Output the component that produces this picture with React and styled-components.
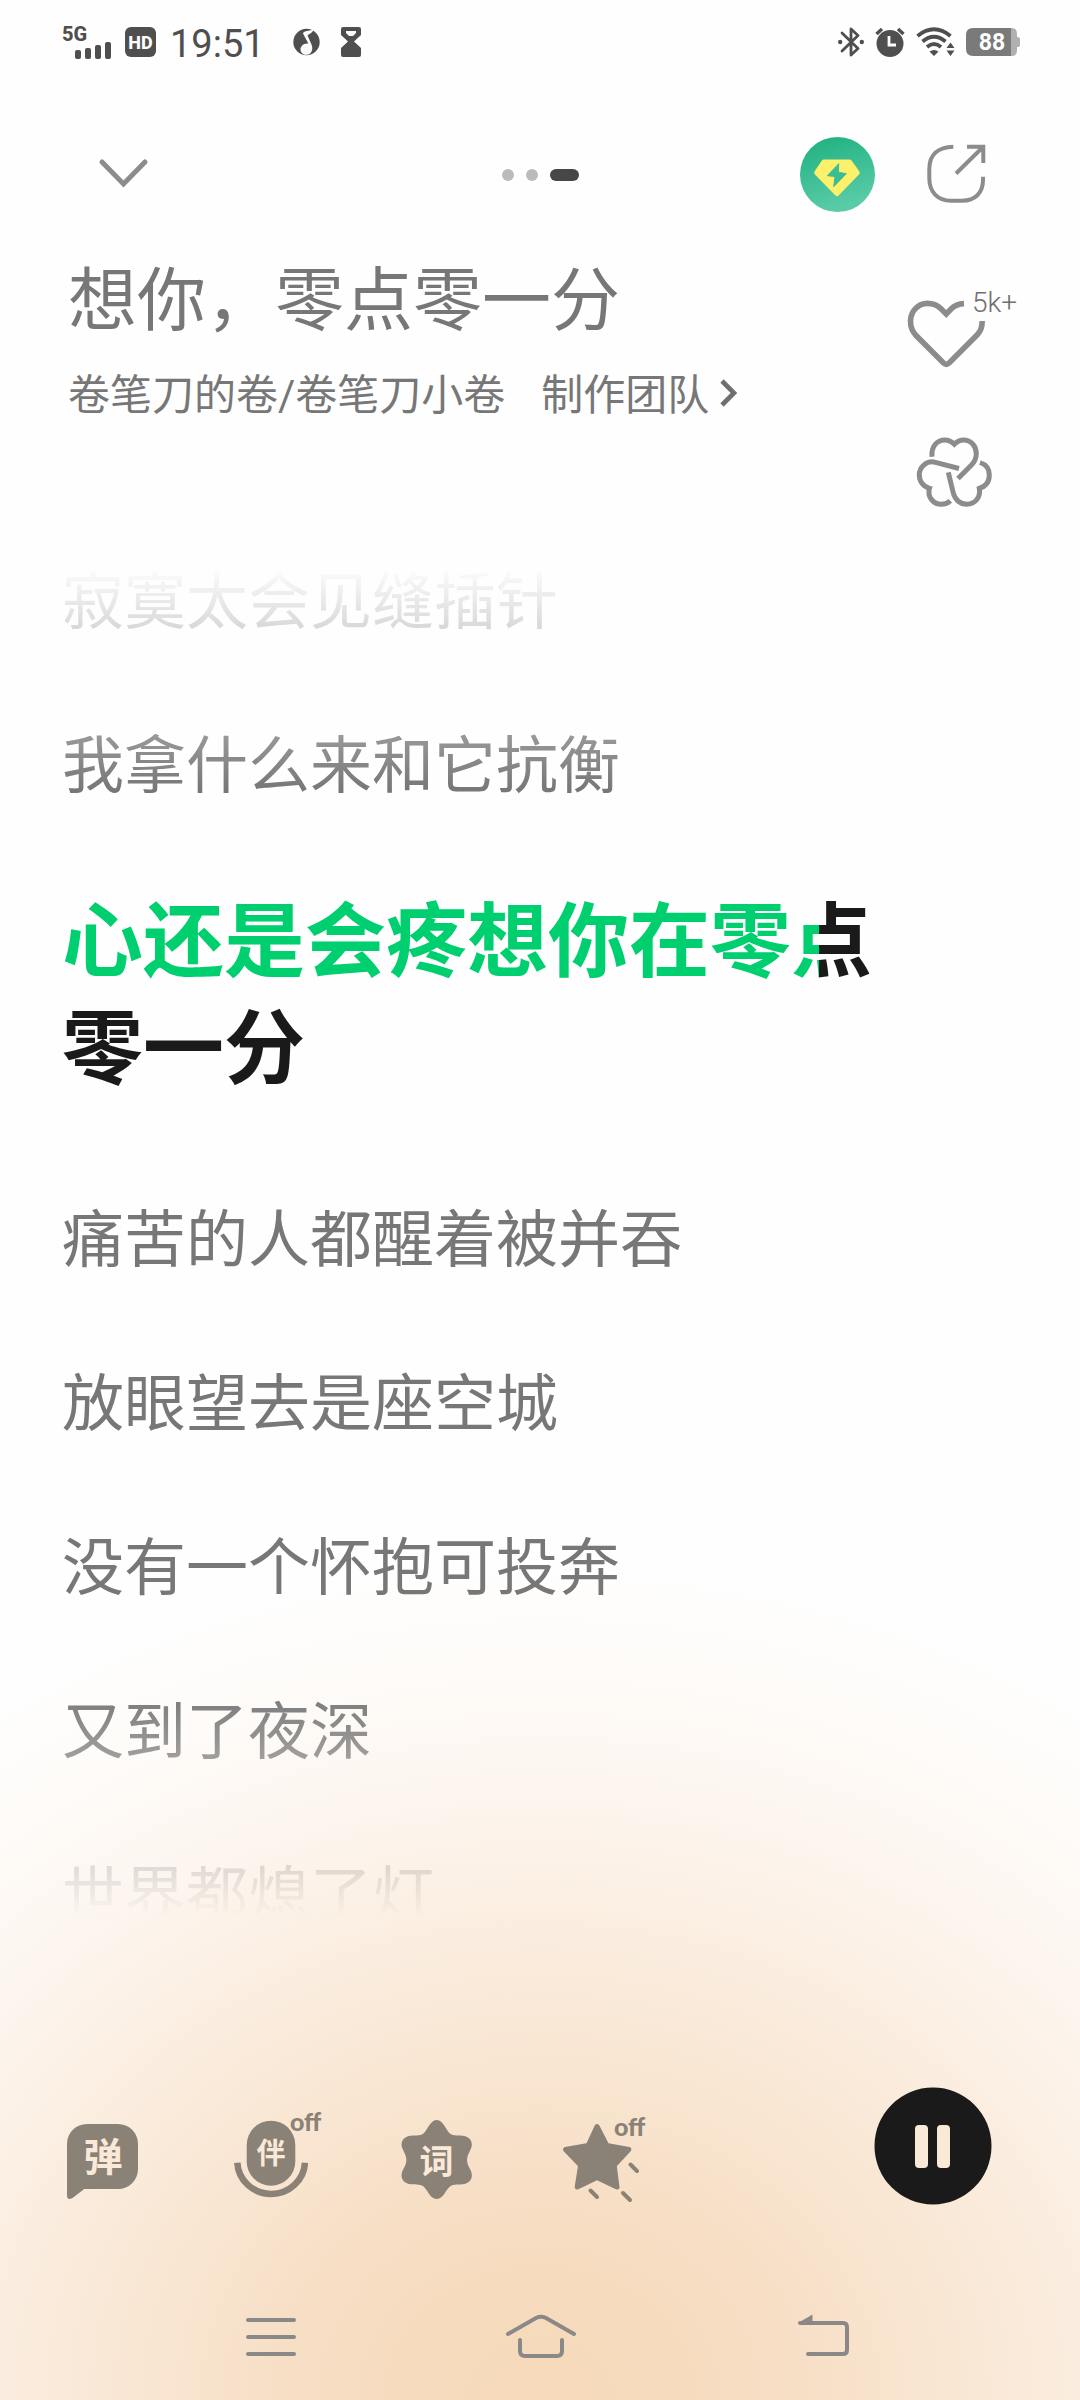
import React from 'react';
import styled, { createGlobalStyle } from 'styled-components';

const lines = [
  { id: 1, text: '寂寞太会见缝插针' },
  { id: 2, text: '我拿什么来和它抗衡' },
  { id: 3, active: true, sung: '心还是会疼想你在零', current: '点', progress: 35, rest: '零一分' },
  { id: 4, text: '痛苦的人都醒着被并吞' },
  { id: 5, text: '放眼望去是座空城' },
  { id: 6, text: '没有一个怀抱可投奔' },
  { id: 7, text: '又到了夜深' },
  { id: 8, text: '世界都熄了灯' },
];

export default function App() {
  return (
    <>
      <GlobalStyle />
      <Screen>
        <StatusBar />
        <PlayerHeader />
        <SongInfo />
        <Lyrics>
          {lines.map(line => <Line key={line.id} line={line} />)}
        </Lyrics>
        <PlayerTools />
        <SystemNav />
      </Screen>
    </>
  )
}

function StatusBar() {
  return (
    <StatusWrapper>
      <StatusGroup $gap={14}>
        <svg width="48" height="34" viewBox="0 0 48 34" fill="#4f4f4f">
          <text x="-1" y="16" fontSize="20" fontWeight="800">5G</text>
          <rect x="12" y="25" width="6" height="9" rx="2" />
          <rect x="22" y="23" width="6" height="11" rx="2" />
          <rect x="32" y="20" width="6" height="14" rx="2" />
          <rect x="42" y="17" width="6" height="17" rx="2" />
        </svg>
        <svg width="31" height="30" viewBox="0 0 31 30">
          <rect width="31" height="30" rx="6" fill="#4f4f4f" />
          <text x="15.500" y="21.500" textAnchor="middle" fontSize="18" fontWeight="800" fill="#fdfdfd">HD</text>
        </svg>
        <Clock>19:51</Clock>
        <svg width="27" height="28" viewBox="0 0 27 28">
          <circle cx="13.5" cy="14" r="13.2" fill="#4f4f4f" />
          <path d="M20.500 1 C18 3.500 10.500 2 10 5.500 L15.500 15.800 C11.500 14.600 7.500 18 7.500 21.500 C7.500 24.500 10 26.800 13.500 26.800 C18.500 26.800 20.500 21.500 18.500 16.500 L14.500 7.500 C16.500 5.500 20 5 20.500 1Z" fill="#fdfdfd" />
        </svg>
        <Hourglass width="20" height="30" viewBox="0 0 20 30">
          <path d="M2 0 H18 Q20 0 20 2 V8 L13 14.5 L20 21 V28 Q20 30 18 30 H2 Q0 30 0 28 V21 L7 14.5 L0 8 V2 Q0 0 2 0Z" fill="#4f4f4f" />
          <path d="M5 4 H15 V6 L12 9 H8 L5 6Z" fill="#fdfdfd" />
        </Hourglass>
      </StatusGroup>
      <StatusGroup $gap={11}>
        <svg width="26" height="30" viewBox="0 0 26 30" fill="none" stroke="#4f4f4f" strokeWidth="2.800">
          <path d="M4 6 L20 21.5 L13 28 V2 L20 8.5 L4 24" strokeLinejoin="round" strokeLinecap="round" />
          <circle cx="2.2" cy="15" r="2.2" fill="#4f4f4f" stroke="none" />
          <circle cx="23.8" cy="15" r="2.2" fill="#4f4f4f" stroke="none" />
        </svg>
        <svg width="30" height="30" viewBox="0 0 30 30">
          <circle cx="15" cy="16.5" r="13.5" fill="#4f4f4f" />
          <path d="M1.5 7 L7 2 M28.500 7 L23 2" stroke="#4f4f4f" strokeWidth="3.4" />
          <path d="M14 9 V18 H21" stroke="#fdfdfd" strokeWidth="2.8" fill="none" />
        </svg>
        <svg width="39" height="30" viewBox="0 0 39 30" fill="none" stroke="#4f4f4f" strokeWidth="3.800">
          <path d="M1.500 9 Q18 -4.500 34.500 9" />
          <path d="M6.500 14.500 Q18 5 29.500 14.500" />
          <path d="M11 20 Q18 14 25 20" />
          <path d="M18 29 L13.500 24.500 Q18 21.500 22.500 24.500Z M34.500 15.500 L38.500 21 H30.500Z M34.500 29 L38.500 23.500 H30.500Z" fill="#4f4f4f" stroke="none" />
        </svg>
        <svg width="54" height="28" viewBox="0 0 54 28">
          <path d="M44 0 H46 Q51 0 51 6 V9 Q54 9 54 11 V17 Q54 19 51 19 V22 Q51 28 46 28 H44Z" fill="#b0b0b0" />
          <path d="M7 0 H45 V28 H7 Q0 28 0 21 V7 Q0 0 7 0Z" fill="#7a7a7a" />
          <text x="26" y="22" textAnchor="middle" fontSize="23" fontWeight="700" fill="#fdfdfd">88</text>
        </svg>
      </StatusGroup>
    </StatusWrapper>
  )
}

function PlayerHeader() {
  return (
    <HeaderWrapper>
      <IconButton aria-label="收起">
        <svg width="60" height="34" viewBox="0 0 60 34" fill="none" stroke="#8c8c8c" strokeWidth="5">
          <path d="M14 4 L35.500 26 L57 4" strokeLinecap="round" />
        </svg>
      </IconButton>
      <Pager>
        <Dot />
        <Dot />
        <Dot $current />
      </Pager>
      <HeaderActions>
        <IconButton aria-label="会员">
          <svg width="75" height="75" viewBox="0 0 75 75">
            <defs>
              <linearGradient id="vip" x1="0" y1="0" x2="0.300" y2="1">
                <stop offset="0" stopColor="#1db07f" />
                <stop offset="1" stopColor="#59cba7" />
              </linearGradient>
            </defs>
            <circle cx="37.500" cy="37.500" r="37.500" fill="url(#vip)" />
            <path d="M24 25 H49.500 L57.200 35.700 L37 56.500 L16.700 35.700Z" fill="#fdf06a" stroke="#fdf06a" strokeWidth="5" strokeLinejoin="round" />
            <path d="M38.700 26.700 L27.300 38.700 L35 39.500 L33.700 49.700 L46.300 36.700 L38.500 35.300Z" fill="#3bbd94" stroke="#3bbd94" strokeLinejoin="round" />
          </svg>
        </IconButton>
        <IconButton aria-label="分享">
          <svg width="72" height="68" viewBox="0 0 72 68" fill="none" stroke="#8c8c8c" strokeWidth="4">
            <path d="M33.300 5.700 C18 6 9.300 13.500 9.300 28 V37 C9.300 51 17.500 59.700 31 59.700 H42 C55 59.700 63 52 63 39 V35.700" />
            <path d="M47 5.700 H63.300 V22 M62 7 L36 32.500" />
          </svg>
        </IconButton>
      </HeaderActions>
    </HeaderWrapper>
  )
}

function SongInfo() {
  return (
    <SongWrapper>
      <SongText>
        <Title>想你，零点零一分</Title>
        <Credits>
          <a href="#artist">卷笔刀的卷/卷笔刀小卷</a>
          <a href="#team">
            制作团队
            <svg width="22" height="32" viewBox="0 0 22 32" fill="none" stroke="#6f6f6f" strokeWidth="4.600">
              <path d="M5 1 L17 13 L5 25" />
            </svg>
          </a>
        </Credits>
      </SongText>
      <SongActions>
        <IconButton aria-label="喜欢">
          <svg width="96" height="80" viewBox="0 0 96 80" fill="none" stroke="#8c8c8c" strokeWidth="5.600">
            <path d="M64 13.600 C59 13.800 54.500 15.500 51.300 18.800 L46.300 24 L41 18.700 C37.500 15.300 32.500 13.400 27.500 13.400 C18 13.400 10.500 21.500 10.500 31.300 C10.500 36.500 12.300 41.300 15.600 45 L43.500 73 Q46.300 75.500 49.100 73 L77.500 44.500 C80.800 41 82.200 36 82.200 31" />
          </svg>
          <Count>5k+</Count>
        </IconButton>
        <IconButton aria-label="三叶草">
          <svg width="96" height="80" viewBox="0 0 96 80" fill="none" stroke="#8c8c8c" strokeWidth="5">
            <path d="M32 24.700 C31 15 36.500 8 45 8 C48.500 8 51.500 9.500 54.300 12.300 C57 9.500 60 8 63.500 8 C71 8 76.300 14 76.300 21.500 C76.300 26 74.500 30 71.500 33 L58 46.500" />
            <path d="M59 36.500 L35.500 30.300 C26.500 28 19.300 35 19.300 43 C19.300 49.500 23.500 54.700 29.500 56.300 C27 64.500 33 72.300 41.500 72.300 C45 72.300 48 71 50.300 68.700" />
            <path d="M48.300 40.300 L53.300 61 C55 68 60.500 72.300 66.700 72.300 C75.500 72.300 80.800 65 79.300 56.500 C85.500 54.500 89.300 49.500 89.300 43 C89.300 37 86 32.500 80 30.500" />
          </svg>
        </IconButton>
      </SongActions>
    </SongWrapper>
  )
}

function Line({ line }) {
  if (!line.active) return <LyricLine>{line.text}</LyricLine>
  return (
    <ActiveLine>
      <Sung>{line.sung}</Sung>
      <Singing $progress={line.progress}>{line.current}</Singing>
      {line.rest}
    </ActiveLine>
  )
}

function PlayerTools() {
  return (
    <ToolsWrapper>
      <ToolList>
        <IconButton aria-label="弹幕">
          <ToolIcon viewBox="0 0 96 96">
            <path d="M25 15 H56 A20 20 0 0 1 76 35 V60 A20 20 0 0 1 56 80 H22.300 L10.500 89 Q5 92 5 86 V35 A20 20 0 0 1 25 15Z" />
            <text className="glyph" x="41" y="62" fontSize="39">弹</text>
          </ToolIcon>
        </IconButton>
        <IconButton aria-label="伴唱">
          <ToolIcon viewBox="0 0 96 96">
            <rect x="18.700" y="11.700" width="48.600" height="65" rx="24.300" />
            <path d="M9.300 53.700 A33.900 33 0 0 0 77 53.700" fill="none" stroke="#8a8177" strokeWidth="6.500" />
            <text className="glyph" x="43" y="55" fontSize="29">伴</text>
            <text className="off" x="62" y="22">off</text>
          </ToolIcon>
        </IconButton>
        <IconButton aria-label="歌词">
          <ToolIcon viewBox="0 0 96 96">
            <path d="M42.700 11 C50 11 52 23 57.500 25.500 C61 27 68 26 72 27.500 C77.500 29.500 79 35 77 39.500 C75.500 43 73 46.500 73 51 C73 55.500 75.500 58.500 77 62 C79 67 77.500 72.500 72 74.500 C68 76 61 75 57.500 76.500 C52 79 50 90 42.700 90 C35.400 90 33.400 79 27.900 76.500 C24.400 75 17.400 76 13.400 74.500 C7.900 72.500 6.400 67 8.400 62 C9.900 58.500 12.400 55.500 12.400 51 C12.400 46.500 9.900 43 8.400 39.500 C6.400 35 7.900 29.500 13.400 27.500 C17.400 26 24.400 27 27.900 25.500 C33.400 23 35.400 11 42.700 11Z" />
            <text className="glyph" x="42.500" y="65" fontSize="34">词</text>
          </ToolIcon>
        </IconButton>
        <IconButton aria-label="特效">
          <ToolIcon viewBox="0 0 96 96">
            <path d="M37 17.500 L46.800 36.500 L68.800 40.500 L54.200 56.300 L57 78 L37 68.500 L17.200 78 L20.600 56.300 L5.500 40.500 L28.200 36.500Z" stroke="#8a8177" strokeWidth="5" strokeLinejoin="round" />
            <path d="M70.500 55.500 L77 62 M30.500 81.500 L37 88 M63 84 L70 91" stroke="#8a8177" strokeWidth="4" strokeLinecap="round" />
            <text className="off" x="54" y="27">off</text>
          </ToolIcon>
        </IconButton>
      </ToolList>
      <IconButton aria-label="暂停">
        <svg width="118" height="118" viewBox="0 0 118 118">
          <circle cx="59" cy="59" r="58.500" fill="#1a1a1a" />
          <rect x="41" y="38" width="13" height="43" rx="4" fill="#fbe9d7" />
          <rect x="63" y="38" width="13" height="43" rx="4" fill="#fbe9d7" />
        </svg>
      </IconButton>
    </ToolsWrapper>
  )
}

function SystemNav() {
  return (
    <NavWrapper>
      <IconButton aria-label="最近任务">
        <NavIcon viewBox="0 0 80 52">
          <path d="M17 10 H63 M17 27 H63 M17 44 H63" />
        </NavIcon>
      </IconButton>
      <IconButton aria-label="主屏幕">
        <NavIcon viewBox="0 0 80 52">
          <path d="M8 24 L36 8 Q41 5.500 46 8 L74 24" />
          <path d="M20 30 V41 Q20 46 25 46 H57 Q62 46 62 41 V30" />
        </NavIcon>
      </IconButton>
      <IconButton aria-label="返回">
        <NavIcon viewBox="0 0 80 52">
          <path d="M31 13 H74 Q78 13 78 17 V40 Q78 44 74 44 H39" />
          <path d="M29 13 L43.500 4.500 V14Z" fill="#8b8987" stroke="none" />
        </NavIcon>
      </IconButton>
    </NavWrapper>
  )
}

const GlobalStyle = createGlobalStyle`
  *{
    box-sizing:border-box;
  }
  body{
    margin:0;
    background:#fefefe;
    font-family:Roboto, "Noto Sans CJK SC", sans-serif;
  }
  svg{
    display:block;
    flex-shrink:0;
    overflow:visible;
  }
`

const Screen = styled.main`
  display:flex;
  flex-direction:column;
  height:100vh;
  background:radial-gradient(1000px 860px at 50% 100%, #f6d9ba 0%, #f6dbbe 14%, #f7dfc6 26%, #f9e7d4 42%, #fbeee1 56%, #fdf6f0 72%, #fefbf8 85%, #fefefe 98%);
`

const StatusWrapper = styled.div`
  display:flex;
  justify-content:space-between;
  align-items:center;
  height:84px;
  padding:0 60px 0 63px;
`

const StatusGroup = styled.div`
  display:flex;
  align-items:center;
  gap:${props => props.$gap}px;
`

const Clock = styled.time`
  margin-right:14px;
  padding-top:4px;
  font-size:38px;
  line-height:40px;
  color:#4f4f4f;
`

const Hourglass = styled.svg`
  margin-left:7px;
`

const IconButton = styled.button`
  position:relative;
  display:block;
  padding:0;
  border:0;
  background:none;
  font-family:inherit;
  cursor:pointer;
`

const HeaderWrapper = styled.header`
  display:grid;
  grid-template-columns:1fr auto 1fr;
  align-items:center;
  margin-top:53px;
  padding:0 88px;
`

const Pager = styled.div`
  display:flex;
  gap:12px;
`

const Dot = styled.span`
  width:${props => (props.$current ? 29 : 12)}px;
  height:12px;
  border-radius:6px;
  background:${props => (props.$current ? '#474747' : '#bbbbbb')};
`

const HeaderActions = styled.div`
  display:flex;
  justify-content:flex-end;
  align-items:center;
  gap:45px;
`

const SongWrapper = styled.section`
  display:flex;
  justify-content:space-between;
  margin-top:48px;
  padding:0 84px 0 68px;
`

const SongText = styled.div`
  display:flex;
  flex-direction:column;
  gap:24px;
`

const Title = styled.h1`
  margin:0;
  font-size:69px;
  font-weight:400;
  line-height:84px;
  color:#777;
`

const Credits = styled.div`
  display:flex;
  gap:36px;
  font-size:42px;
  line-height:56px;
    a{
      display:flex;
      align-items:center;
      gap:8px;
      color:#777;
      text-decoration:none;
    }
`

const SongActions = styled.div`
  display:flex;
  flex-direction:column;
  gap:62px;
  padding-top:30px;
`

const Count = styled.span`
  position:absolute;
  top:-3px;
  left:72px;
  font-size:28px;
  font-weight:300;
  line-height:32px;
  color:#6f6f6f;
`

const Lyrics = styled.section`
  display:flex;
  flex-direction:column;
  flex:1 1 0;
  gap:80px;
  min-height:0;
  margin-top:46px;
  padding:3px 160px 0 62px;
  overflow:hidden;
  mask-image:linear-gradient(180deg, transparent 8px, #000 232px, #000 calc(100% - 226px), transparent);
`

const LyricLine = styled.p`
  flex-shrink:0;
  margin:0;
  font-size:62px;
  line-height:84px;
  color:#777;
`

const ActiveLine = styled.p`
  flex-shrink:0;
  margin:0;
  padding-bottom:16px;
  font-size:81px;
  font-weight:700;
  line-height:107px;
  color:#1a1a1a;
`

const Sung = styled.span`
  color:#00cf6f;
`

const Singing = styled.span`
  color:transparent;
  background:linear-gradient(90deg, #00cf6f ${props => props.$progress}%, #1a1a1a ${props => props.$progress}%);
  background-clip:text;
`

const ToolsWrapper = styled.div`
  display:flex;
  justify-content:space-between;
  align-items:flex-end;
  margin-top:171px;
  padding:0 88px 0 62px;
`

const ToolList = styled.div`
  display:flex;
  gap:70px;
`

const ToolIcon = styled.svg`
  width:96px;
  height:96px;
  fill:#8a8177;
    .glyph{
      fill:#fbe9d7;
      font-weight:700;
      text-anchor:middle;
    }
    .off{
      font-family:Lato, sans-serif;
      font-size:25px;
      font-weight:900;
    }
`

const NavWrapper = styled.nav`
  display:flex;
  justify-content:space-between;
  margin-top:105px;
  padding:0 231px 38px;
`

const NavIcon = styled.svg`
  width:80px;
  height:52px;
  fill:none;
  stroke:#8b8987;
  stroke-width:4px;
  stroke-linecap:round;
`
